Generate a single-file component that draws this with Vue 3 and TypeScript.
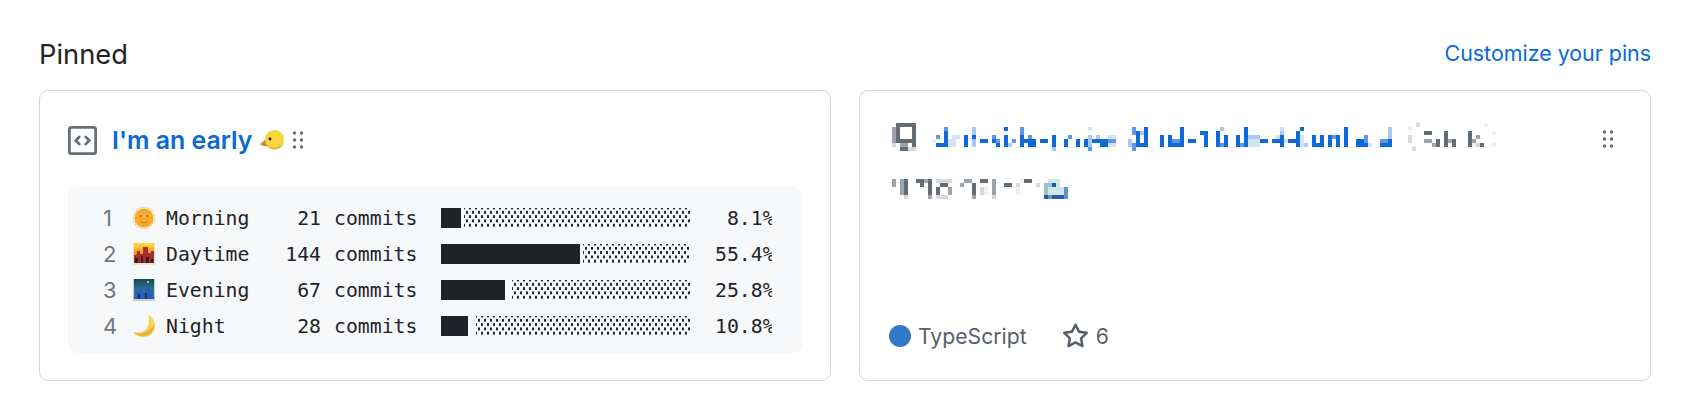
<script setup lang="ts">
// 左侧卡片的统计行
const rows = [
  { no: 1, icon: 'sun', name: 'Morning', count: 21, fill: 20, gap: 3, pct: '8.1%' },
  { no: 2, icon: 'dusk', name: 'Daytime', count: 144, fill: 139, gap: 3, pct: '55.4%' },
  { no: 3, icon: 'city', name: 'Evening', count: 67, fill: 64, gap: 7, pct: '25.8%' },
  { no: 4, icon: 'moon', name: 'Night', count: 28, fill: 27, gap: 8, pct: '10.8%' }
];

// 打码区域的色块，每格 4px：[列, 行, 宽, 高, 颜色]
const tones: Record<string, string> = {
  b: '#0e69dd', m: '#5c9ae8', s: '#a9c8f3', l: '#d3e2f8', p: '#f0f5fd',
  d: '#646c76', g: '#9ea4ab', h: '#d6d9dc', w: '#eff0f1',
  n: '#2a5ba6', t: '#9cc3cf', c: '#cfe8e6', u: '#5c97c4', k: '#0b5cad'
};

type Cell = [number, number, number, number, string];

const cells: Cell[] = [
  // 仓库图标
  [2, 1, 5, 1, 'd'], [1, 2, 1, 4, 'g'], [1, 6, 1, 1, 'h'], [2, 2, 1, 4, 'd'], [6, 2, 1, 5, 'd'],
  [2, 5, 5, 1, 'd'], [3, 6, 2, 1, 'g'], [3, 7, 2, 1, 'd'], [5, 7, 2, 1, 'h'],
  // 仓库名
  [14, 2, 1, 1, 'm'], [14, 3, 1, 4, 'b'], [12, 4, 1, 1, 'm'], [11, 5, 1, 1, 'p'], [12, 6, 2, 1, 'b'],
  [15, 5, 2, 2, 'l'], [16, 4, 2, 1, 'l'], [19, 4, 1, 3, 'b'], [21, 2, 1, 2, 's'], [21, 4, 1, 1, 'b'], [21, 5, 1, 2, 's'],
  [23, 5, 2, 1, 'b'], [26, 4, 1, 1, 'm'], [26, 5, 1, 1, 'b'], [27, 5, 1, 1, 'm'], [27, 6, 1, 1, 'b'],
  [29, 2, 1, 1, 'b'], [29, 4, 1, 3, 'b'], [31, 5, 1, 1, 'm'], [30, 6, 1, 1, 's'],
  [33, 2, 1, 2, 'm'], [33, 4, 1, 3, 'b'], [34, 5, 3, 1, 'b'], [35, 4, 1, 1, 'm'], [35, 6, 2, 1, 'b'],
  [38, 5, 2, 1, 'b'], [41, 4, 1, 3, 'b'], [41, 7, 1, 1, 's'], [42, 6, 1, 1, 'p'], [45, 4, 1, 1, 'm'],
  [44, 5, 1, 2, 'b'], [47, 5, 1, 2, 'b'], [49, 5, 1, 2, 'b'], [50, 2, 1, 1, 'l'], [50, 4, 1, 3, 's'], [50, 7, 1, 1, 'm'],
  [51, 5, 2, 1, 'b'], [52, 4, 1, 1, 's'],
  [53, 5, 2, 2, 'b'], [55, 4, 2, 1, 'l'], [55, 5, 2, 1, 'm'], [55, 6, 2, 1, 'l'],
  [60, 5, 1, 2, 's'], [61, 2, 1, 2, 'm'], [62, 3, 1, 4, 'b'], [61, 6, 1, 2, 'm'], [63, 6, 1, 1, 'b'], [64, 2, 1, 1, 'b'], [64, 3, 1, 4, 'b'], [63, 3, 1, 1, 's'],
  [68, 4, 1, 3, 'b'], [70, 4, 1, 3, 'b'], [71, 5, 2, 1, 'm'], [71, 6, 2, 1, 'b'], [73, 2, 1, 5, 'b'],
  [75, 5, 2, 1, 'b'], [78, 3, 2, 1, 'b'], [79, 4, 1, 3, 'b'],
  [83, 2, 1, 1, 's'], [82, 3, 1, 4, 'b'], [83, 6, 1, 1, 'm'], [84, 4, 1, 3, 'b'],
  [87, 4, 1, 3, 'b'], [88, 6, 1, 1, 'm'], [89, 2, 1, 5, 'b'], [90, 4, 3, 1, 's'], [90, 5, 3, 2, 'l'],
  [93, 5, 2, 1, 'b'], [97, 4, 1, 1, 'l'], [96, 5, 2, 1, 'b'], [98, 2, 1, 1, 'l'], [98, 3, 1, 1, 's'], [98, 4, 1, 3, 'b'], [99, 5, 1, 1, 'l'],
  [100, 5, 2, 1, 'b'], [102, 3, 1, 4, 'b'], [103, 2, 1, 1, 'b'], [103, 4, 1, 3, 'l'], [104, 6, 1, 1, 's'],
  [106, 4, 1, 3, 'b'], [107, 6, 1, 1, 'b'], [108, 4, 1, 3, 'b'], [110, 4, 1, 3, 'b'], [111, 4, 1, 1, 'm'], [112, 4, 1, 3, 'b'],
  [114, 2, 1, 5, 'b'], [117, 5, 2, 2, 'b'], [119, 4, 1, 2, 'm'], [119, 6, 1, 1, 'b'], [120, 6, 1, 1, 'l'],
  [123, 5, 2, 1, 'm'], [123, 6, 2, 1, 'b'], [125, 2, 1, 3, 's'], [125, 5, 1, 2, 'b'],
  // (Public)
  [132, 1, 1, 1, 'h'], [130, 2, 1, 1, 'w'], [130, 4, 1, 2, 'h'], [131, 7, 1, 1, 'h'],
  [134, 3, 2, 1, 'd'], [134, 5, 2, 1, 'g'], [136, 6, 1, 1, 'g'], [137, 5, 1, 2, 'd'], [139, 3, 1, 4, 'd'], [140, 5, 1, 1, 'g'], [141, 5, 1, 2, 'd'],
  [145, 3, 1, 4, 'd'], [146, 5, 1, 1, 'g'], [146, 6, 1, 1, 'w'], [147, 4, 1, 1, 'g'], [147, 6, 1, 1, 'h'], [148, 6, 1, 1, 'd'],
  [149, 1, 1, 1, 'w'], [151, 3, 1, 1, 'w'], [151, 6, 1, 1, 'w'],
  // 描述
  [1, 15, 1, 2, 'g'], [3, 15, 1, 4, 'g'], [4, 15, 1, 4, 'd'], [4, 19, 1, 1, 'h'], [7, 15, 2, 1, 'd'], [8, 16, 1, 1, 'd'], [9, 15, 1, 1, 'g'],
  [10, 15, 1, 4, 'd'], [10, 19, 1, 1, 'g'], [12, 15, 1, 1, 'h'], [12, 17, 1, 2, 'd'], [13, 15, 2, 1, 'h'], [13, 16, 2, 1, 'd'], [15, 15, 1, 1, 'h'], [15, 17, 1, 2, 'g'],
  [12, 19, 3, 1, 'h'], [18, 16, 1, 1, 'g'], [19, 15, 2, 1, 'g'], [21, 16, 1, 3, 'd'], [21, 19, 1, 1, 'g'], [23, 15, 2, 1, 'd'], [23, 17, 1, 2, 'h'], [24, 17, 1, 2, 'w'],
  [26, 15, 1, 4, 'g'], [26, 19, 1, 1, 'h'], [29, 16, 2, 1, 'd'], [32, 16, 1, 1, 'h'], [32, 17, 1, 2, 'w'], [33, 15, 1, 1, 'w'], [34, 15, 2, 1, 'd'], [37, 16, 1, 1, 'h'],
  // 描述末尾的表情
  [40, 15, 3, 1, 'c'], [39, 16, 1, 3, 't'], [40, 16, 1, 1, 't'], [41, 15, 1, 1, 'c'], [41, 16, 1, 1, 'k'], [42, 16, 1, 1, 'c'],
  [40, 17, 4, 2, 'c'], [44, 17, 1, 2, 'u'], [39, 19, 1, 1, 'n'], [40, 19, 1, 1, 'u'], [41, 19, 2, 1, 'n'], [43, 19, 1, 1, 'n'], [44, 19, 1, 1, 'u']
];
</script>

<template>
  <section class="pinned">
    <header class="pinned-head">
      <h2>Pinned</h2>
      <a class="customize">Customize your pins</a>
    </header>

    <div class="cards">
      <article class="card">
        <div class="gist-title">
          <svg class="code-icon" viewBox="0 0 16 16">
            <path d="M0 1.75C0 .784.784 0 1.75 0h12.5C15.216 0 16 .784 16 1.75v12.5A1.75 1.75 0 0 1 14.25 16H1.75A1.75 1.75 0 0 1 0 14.25Zm1.75-.25a.25.25 0 0 0-.25.25v12.5c0 .138.112.25.25.25h12.5a.25.25 0 0 0 .25-.25V1.75a.25.25 0 0 0-.25-.25Zm7.47 3.97a.75.75 0 0 1 1.06 0l2 2a.75.75 0 0 1 0 1.06l-2 2a.749.749 0 0 1-1.275-.326.749.749 0 0 1 .215-.734L10.69 8 9.22 6.53a.75.75 0 0 1 0-1.06ZM6.78 6.53 5.31 8l1.47 1.47a.749.749 0 0 1-.326 1.275.749.749 0 0 1-.734-.215l-2-2a.75.75 0 0 1 0-1.06l2-2a.751.751 0 0 1 1.042.018.751.751 0 0 1 .018 1.042Z" />
          </svg>
          <a class="gist-link">I'm an early</a>
          <svg class="duck" viewBox="0 0 24 20">
            <path d="M6 9 0 14c1.500 2 4.500 2.500 8 2Z" fill="#c98a55" />
            <circle cx="14.500" cy="9.500" r="9.500" fill="#f8d440" />
            <path d="M6.500 15c4 4 13 4.500 17-3-1 9-14 10-17 3Z" fill="#e6ad2c" />
            <circle cx="10" cy="9" r="1.400" fill="#1f1a10" />
          </svg>
          <svg class="grip" viewBox="0 0 16 16">
            <path d="M10 13a1 1 0 1 1 0-2 1 1 0 0 1 0 2Zm-4 0a1 1 0 1 1 0-2 1 1 0 0 1 0 2Zm1-5a1 1 0 1 1-2 0 1 1 0 0 1 2 0Zm3 1a1 1 0 1 1 0-2 1 1 0 0 1 0 2Zm1-5a1 1 0 1 1-2 0 1 1 0 0 1 2 0ZM6 5a1 1 0 1 1 0-2 1 1 0 0 1 0 2Z" />
          </svg>
        </div>

        <div class="stats">
          <div v-for="row in rows" :key="row.no" class="stat-row">
            <span class="line-no">{{ row.no }}</span>
            <svg class="emoji" viewBox="0 0 22 22">
              <defs>
                <linearGradient id="dusk-sky" x1="0" y1="0" x2="0" y2="1">
                  <stop offset="0" stop-color="#fde03a" />
                  <stop offset="0.55" stop-color="#f08a24" />
                  <stop offset="1" stop-color="#c23a22" />
                </linearGradient>
                <linearGradient id="city-sky" x1="0" y1="0" x2="0" y2="1">
                  <stop offset="0" stop-color="#174a5c" />
                  <stop offset="0.6" stop-color="#2a7d8a" />
                  <stop offset="1" stop-color="#2a6aa8" />
                </linearGradient>
              </defs>
              <template v-if="row.icon === 'sun'">
                <circle cx="11" cy="11" r="10.500" fill="none" stroke="#f9c648" stroke-width="1.200" stroke-dasharray="1.500 1" />
                <circle cx="11" cy="11" r="9.500" fill="#f6a92f" />
                <circle cx="7.500" cy="9" r="1.100" fill="#b8681a" />
                <circle cx="14.500" cy="9" r="1.100" fill="#b8681a" />
                <path d="M7.500 14.500c2 1.500 5 1.500 7 0" fill="none" stroke="#c97a20" stroke-width="1" />
              </template>
              <template v-else-if="row.icon === 'dusk'">
                <rect width="22" height="22" fill="#e6e3df" />
                <rect x="1" y="0" width="20" height="20" fill="url(#dusk-sky)" />
                <path d="M1 20v-8h3V8h3v3h3V4h5v6h3v-2h3v12Z" fill="#a32f2a" />
                <path d="M2 20v-5h3v5Zm6 0v-7h2v7Zm5 0v-6h3v6Zm5 0v-4h2v4Z" fill="#4b1414" />
              </template>
              <template v-else-if="row.icon === 'city'">
                <rect width="22" height="22" fill="#bfcfd2" />
                <rect x="1" y="0" width="20" height="20" fill="url(#city-sky)" />
                <circle cx="15" cy="3" r="1" fill="#f0e06a" />
                <path d="M2 20v-8h4V8h3v5h3V6h4v5h4v9Z" fill="#2a5fb8" />
                <path d="M5 20v-5h2v5Zm7 0v-6h2v6Z" fill="#143468" />
              </template>
              <template v-else>
                <path d="M15 0c4 2 7 6 7 11 0 6-5 11-12 11-4 0-8-2-10-5 3 1 8 1 11-1 5-3 6-10 4-16Z" fill="#f6d35a" />
                <path d="M21 9c1 6-4 12-11 12-4 0-7-1.500-9-4 4 2 9 2 13-1 4-2 6-4 7-7Z" fill="#e9b13a" />
              </template>
            </svg>
            <span class="stat-name">{{ row.name }}</span>
            <span class="stat-count">{{ row.count }}</span>
            <span class="stat-unit">commits</span>
            <div class="bar">
              <div class="bar-fill" :style="{ width: row.fill + 'px', marginRight: row.gap + 'px' }"></div>
              <div class="bar-rest"></div>
            </div>
            <span class="stat-pct">{{ row.pct.padStart(5, ' ') }}</span>
          </div>
        </div>
      </article>

      <article class="card repo-card">
        <div class="repo-head">
          <svg class="blurred" width="620" height="84" viewBox="0 0 155 21" shape-rendering="crispEdges">
            <rect
              v-for="(c, i) in cells"
              :key="i"
              :x="c[0]"
              :y="c[1]"
              :width="c[2]"
              :height="c[3]"
              :fill="tones[c[4]]"
            />
          </svg>
          <svg class="grip repo-grip" viewBox="0 0 16 16">
            <path d="M10 13a1 1 0 1 1 0-2 1 1 0 0 1 0 2Zm-4 0a1 1 0 1 1 0-2 1 1 0 0 1 0 2Zm1-5a1 1 0 1 1-2 0 1 1 0 0 1 2 0Zm3 1a1 1 0 1 1 0-2 1 1 0 0 1 0 2Zm1-5a1 1 0 1 1-2 0 1 1 0 0 1 2 0ZM6 5a1 1 0 1 1 0-2 1 1 0 0 1 0 2Z" />
          </svg>
        </div>
        <div class="repo-meta">
          <span class="lang-dot"></span>
          <span class="lang">TypeScript</span>
          <svg class="star" viewBox="0 0 16 16">
            <path d="M8 .25a.75.75 0 0 1 .673.418l1.882 3.815 4.21.612a.75.75 0 0 1 .416 1.279l-3.046 2.97.719 4.192a.751.751 0 0 1-1.088.791L8 12.347l-3.766 1.98a.75.75 0 0 1-1.088-.79l.72-4.194L.818 6.374a.75.75 0 0 1 .416-1.28l4.21-.611L7.327.668A.75.75 0 0 1 8 .25Zm0 2.445L6.615 5.5a.75.75 0 0 1-.564.41l-3.097.45 2.24 2.184a.75.75 0 0 1 .216.664l-.528 3.084 2.769-1.456a.75.75 0 0 1 .698 0l2.77 1.456-.53-3.084a.75.75 0 0 1 .216-.664l2.24-2.183-3.096-.45a.75.75 0 0 1-.564-.41L8 2.694Z" />
          </svg>
          <span class="lang">6</span>
        </div>
      </article>
    </div>
  </section>
</template>

<style>
body {
  background: #ffffff;
}
</style>

<style scoped>
.pinned {
  padding: 36px 33px 0 39px;
  font-family: Inter, "Liberation Sans", sans-serif;
  color: #1f2328;
}

.pinned-head {
  display: flex;
  align-items: center;
  justify-content: space-between;
  height: 36px;
  margin-bottom: 18px;
}

.pinned-head h2 {
  margin: 0;
  font-size: 27.300px;
  font-weight: 400;
}

.customize {
  position: relative;
  top: -1px;
  font-size: 21.400px;
  color: #0969da;
}

.cards {
  display: grid;
  grid-template-columns: 1fr 1fr;
  gap: 28px;
}

.card {
  box-sizing: border-box;
  height: 291px;
  padding: 28px;
  border: 1px solid #d0d7de;
  border-radius: 9px;
}

.gist-title {
  display: flex;
  align-items: center;
  height: 42px;
  margin-bottom: 26px;
}

.code-icon {
  width: 29px;
  height: 29px;
  margin-right: 15px;
  fill: #656d76;
}

.gist-link {
  font-size: 24.900px;
  font-weight: 600;
  color: #0969da;
}

.duck {
  width: 24px;
  height: 20px;
  margin-left: 8px;
}

.grip {
  width: 28px;
  height: 28px;
  fill: #656d76;
}

.stats {
  height: 166px;
  box-sizing: border-box;
  padding: 13px 0 9px 35px;
  border-radius: 9px;
  background: #f6f8fa;
  font-family: "DejaVu Sans Mono", monospace;
  font-size: 19.800px;
}

.stat-row {
  display: flex;
  align-items: center;
  height: 36px;
  white-space: pre;
}

.line-no {
  width: 30px;
  font-family: Inter, sans-serif;
  font-size: 22px;
  color: #6e7781;
}

.emoji {
  width: 22px;
  height: 22px;
  margin-right: 11px;
}

.stat-name {
  width: 94px;
}

.stat-count {
  width: 61px;
  text-align: right;
}

.stat-unit {
  width: 83px;
  margin-left: 13px;
  margin-right: 24px;
}

.bar {
  display: flex;
  width: 249px;
  height: 20px;
}

.bar-fill {
  flex: none;
  background: #1f2328;
}

.bar-rest {
  flex: 1;
  background-image:
    radial-gradient(circle, #24292f 1.100px, transparent 1.500px),
    radial-gradient(circle, #24292f 1.100px, transparent 1.500px);
  background-size: 6px 8.600px;
  background-position: 0 0, 3px 4.300px;
}

.stat-pct {
  width: 57px;
  margin-left: 25px;
  overflow: hidden;
}

.repo-card {
  display: flex;
  flex-direction: column;
  justify-content: space-between;
}

.repo-head {
  display: flex;
  justify-content: space-between;
  align-items: flex-start;
}

.repo-grip {
  margin-top: 6px;
}

.repo-meta {
  display: flex;
  align-items: center;
  height: 32px;
  font-size: 21.200px;
  color: #57606a;
}

.lang-dot {
  width: 22px;
  height: 22px;
  margin-left: 1px;
  margin-right: 7px;
  border-radius: 50%;
  background: #3178c6;
}

.star {
  width: 27px;
  height: 27px;
  margin-left: 35px;
  margin-right: 7px;
  fill: #57606a;
}
</style>
